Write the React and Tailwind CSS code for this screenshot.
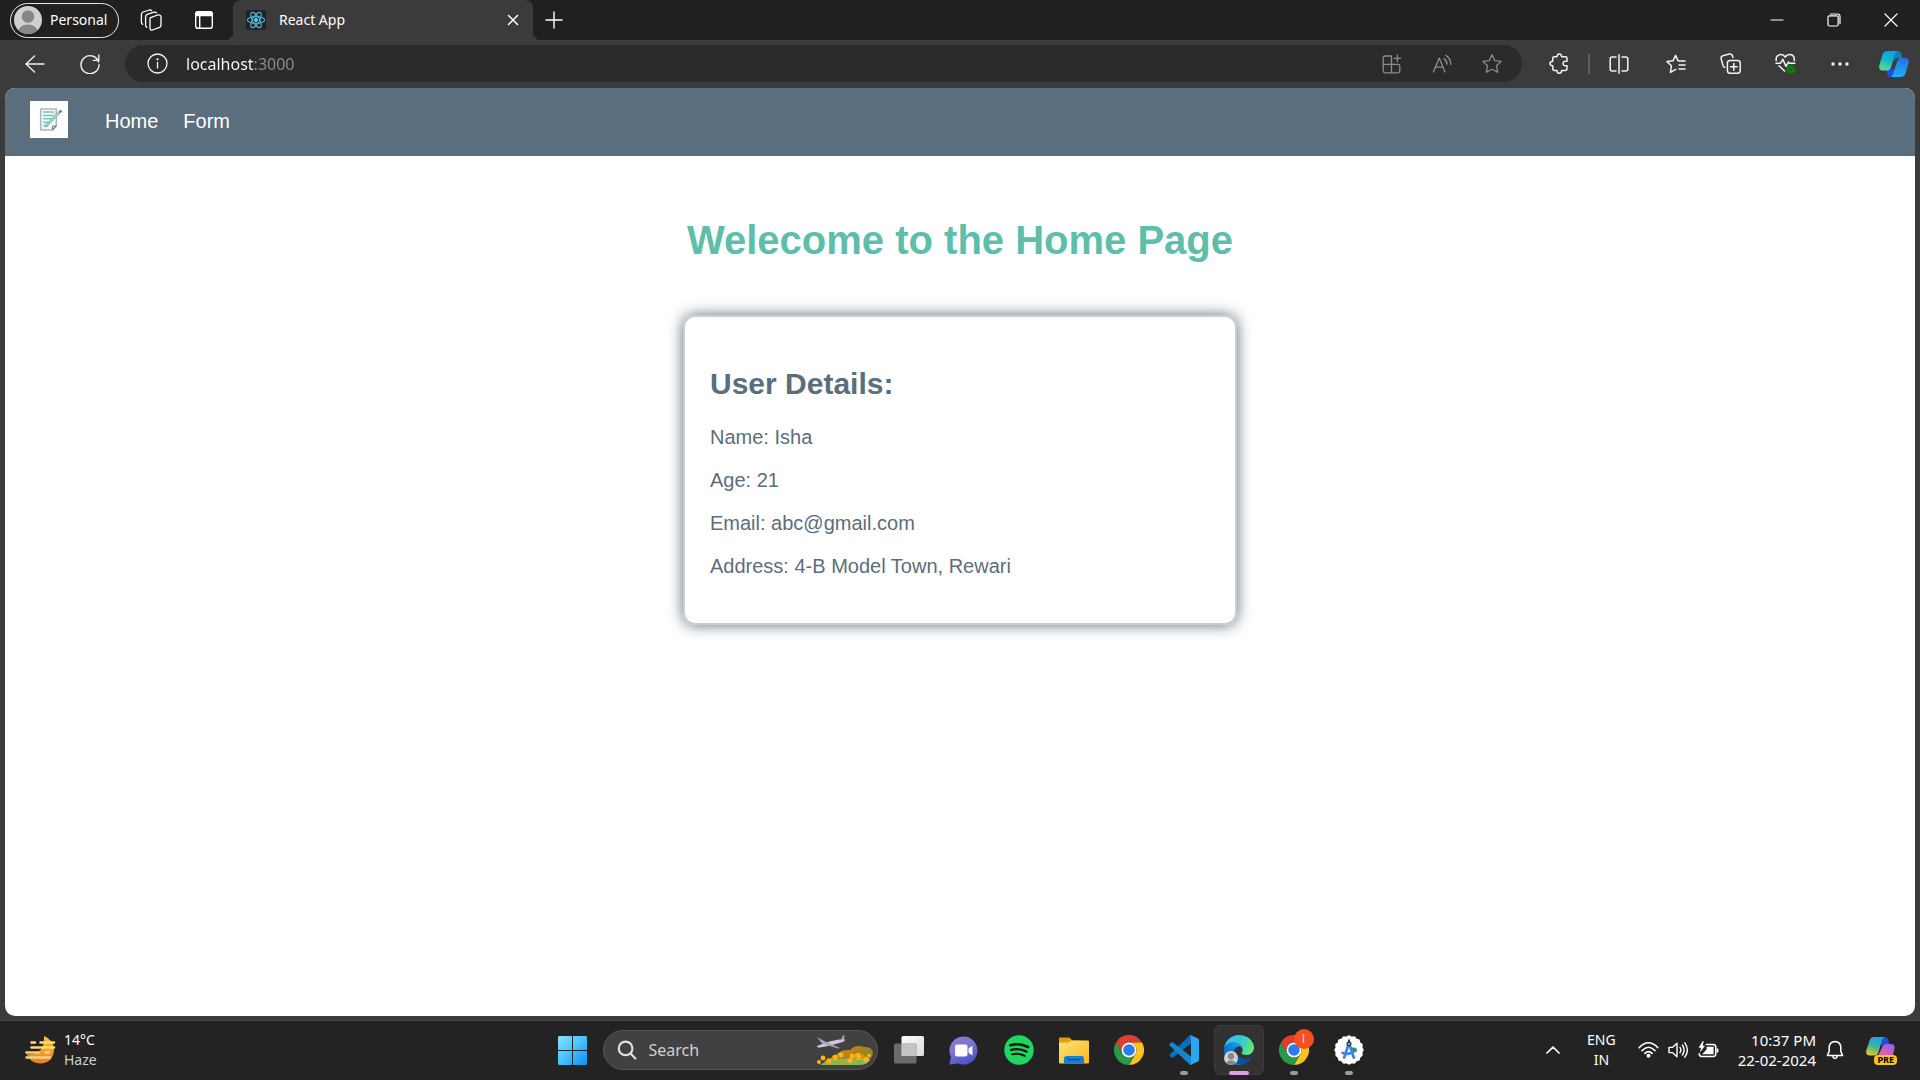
import React from "react";

function Svg({ w = 20, h = 20, sw = 1.4, children, className = "" }) {
  return (
    <svg
      width={w}
      height={h}
      viewBox={`0 0 ${w} ${h}`}
      fill="none"
      stroke="currentColor"
      strokeWidth={sw}
      strokeLinecap="round"
      strokeLinejoin="round"
      className={`shrink-0 ${className}`}
      aria-hidden="true"
    >
      {children}
    </svg>
  );
}

function IconButton({ label, className = "", children }) {
  return (
    <button
      type="button"
      aria-label={label}
      className={`flex shrink-0 items-center justify-center ${className}`}
    >
      {children}
    </button>
  );
}

function Avatar({ size = 28 }) {
  return (
    <svg width={size} height={size} viewBox="0 0 28 28" className="shrink-0" aria-hidden="true">
      <defs>
        <clipPath id={`avatar${size}`}>
          <circle cx="14" cy="14" r="14" />
        </clipPath>
      </defs>
      <g clipPath={`url(#avatar${size})`}>
        <rect width="28" height="28" fill="#d2d0ce" />
        <circle cx="14" cy="10.5" r="6.3" fill="#8a8684" />
        <ellipse cx="14" cy="26" rx="10" ry="7.4" fill="#8a8684" />
      </g>
    </svg>
  );
}

function ReactLogo() {
  return (
    <svg width="20" height="20" viewBox="0 0 20 20" className="shrink-0" aria-hidden="true">
      <rect width="20" height="20" rx="2" fill="#20232a" />
      <g fill="none" stroke="#4fb8d4" strokeWidth="1.1">
        <ellipse cx="10" cy="10" rx="8.6" ry="3.4" />
        <ellipse cx="10" cy="10" rx="8.6" ry="3.4" transform="rotate(60 10 10)" />
        <ellipse cx="10" cy="10" rx="8.6" ry="3.4" transform="rotate(120 10 10)" />
      </g>
      <circle cx="10" cy="10" r="1.9" fill="#61dafb" />
    </svg>
  );
}

function TitleBar() {
  return (
    <div className="flex h-10 items-center bg-[#202020] text-white">
      <button
        type="button"
        className="ml-[10px] mr-[5px] flex h-[35px] w-[109px] shrink-0 items-center gap-2 rounded-full border border-[#e8e8e8] pl-[3px] text-sm"
      >
        <Avatar />
        Personal
      </button>
      <IconButton label="Workspaces" className="h-10 w-[53px]">
        <Svg w={22} h={22} sw={1.3}>
          <path d="M10.6 8.6 L17.6 6 Q21 5.6 21 8 V16 Q21 17.6 19.6 18.3 L12.4 21 Q10 21.4 10 19 V10 Q10 9 10.6 8.6 Z" />
          <path d="M6.8 18.2 Q5.6 17.6 5.6 16 V8 Q5.6 6.2 7.2 5.4 L14 3.2 Q15.6 2.8 16.4 3.8" />
          <path d="M2.6 15.4 Q1.4 14.6 1.4 13 V5.4 Q1.4 3.8 3 3 L9.4 1 Q11 .7 11.6 1.6" />
        </Svg>
      </IconButton>
      <IconButton label="Vertical tabs" className="mr-[3px] h-10 w-[53px]">
        <Svg w={20} h={20}>
          <rect x="1.7" y="1.7" width="16.6" height="16.6" rx="2.4" />
          <path d="M1.2 6.2 V3.6 Q1.2 1.2 3.6 1.2 H16.4 Q18.8 1.2 18.8 3.6 V6.2 Z" fill="currentColor" stroke="none" />
          <path d="M5.7 6 V18" />
        </Svg>
      </IconButton>
      <div className="relative flex h-10 w-[300px] items-center gap-[13px] rounded-t-lg bg-[#3b3b3b] pl-[13px] pr-[11px] before:absolute before:-left-2 before:bottom-0 before:size-2 before:rounded-br-lg before:shadow-[4px_4px_0_0_#3b3b3b] after:absolute after:-right-2 after:bottom-0 after:size-2 after:rounded-bl-lg after:shadow-[-4px_4px_0_0_#3b3b3b]">
        <ReactLogo />
        <span className="flex-1 text-sm">React App</span>
        <IconButton label="Close tab" className="size-[18px]">
          <Svg w={12} h={12} sw={1.5}>
            <path d="M1.5 1.5 L10.5 10.5 M10.5 1.5 L1.5 10.5" />
          </Svg>
        </IconButton>
      </div>
      <IconButton label="New tab" className="h-10 w-[42px]">
        <Svg w={18} h={18} sw={1.4}>
          <path d="M9 1 V17 M1 9 H17" />
        </Svg>
      </IconButton>
      <div className="flex-1" />
      <div className="flex pr-px">
        <IconButton label="Minimize" className="h-10 w-[57px]">
          <Svg w={14} h={14} sw={1.2}>
            <path d="M1 7 H13" />
          </Svg>
        </IconButton>
        <IconButton label="Restore" className="h-10 w-[57px]">
          <Svg w={14} h={14} sw={1.2}>
            <rect x="1" y="2.8" width="10.2" height="10.2" rx="1.5" />
            <path d="M3.4 1 H10.4 Q13 1 13 3.6 V10.6" />
          </Svg>
        </IconButton>
        <IconButton label="Close window" className="h-10 w-[57px]">
          <Svg w={14} h={14} sw={1.2}>
            <path d="M1 1 L13 13 M13 1 L1 13" />
          </Svg>
        </IconButton>
      </div>
    </div>
  );
}

const STAR =
  "M11 1.8 L13.7 7.6 L20.2 8.4 L15.5 12.8 L16.7 19.3 L11 16.2 L5.3 19.3 L6.5 12.8 L1.8 8.4 L8.3 7.6 Z";

function CopilotLogo() {
  return (
    <svg width="30" height="28" viewBox="0 0 30 28" className="shrink-0" aria-hidden="true">
      <defs>
        <linearGradient id="cpA" x1="0.6" y1="0" x2="0.3" y2="1">
          <stop offset="0" stopColor="#0d9fe8" />
          <stop offset="0.5" stopColor="#16b8c8" />
          <stop offset="1" stopColor="#5fdc8c" />
        </linearGradient>
        <linearGradient id="cpB" x1="0.6" y1="0" x2="0.4" y2="1">
          <stop offset="0" stopColor="#2a6fe0" />
          <stop offset="1" stopColor="#17b4ff" />
        </linearGradient>
      </defs>
      <path d="M14 1 H19 Q21.5 1 22.3 4 L23.3 8 H19 Q16.5 8 15.5 11 Z" fill="#0b7fb8" />
      <path d="M16 27 H11.5 Q9 27 8.2 24 L7 20 H11 Q13.5 20 14.5 17 Z" fill="#1f4fe0" />
      <path d="M8 1 H19 Q16.8 1.4 16 4 L12.2 17 Q11.2 20.5 8 20.5 H4 Q-.8 20.5 .4 15 L3.4 5 Q4.6 1 8 1 Z" fill="url(#cpA)" />
      <path d="M22 8 H26 Q30.8 8 29.6 13 L26.6 23 Q25.4 27 22 27 H11.5 Q13.5 26.6 14.2 24 L18 11.5 Q19 8 22 8 Z" fill="url(#cpB)" />
    </svg>
  );
}

function Toolbar() {
  return (
    <div className="flex h-12 items-center bg-[#3b3b3b] pb-px pl-[12px] text-[#f2f2f2]">
      <IconButton label="Back" className="h-10 w-[45px]">
        <Svg w={20} h={18}>
          <path d="M19 9 H1 M9.5 1 L1 9 L9.5 17" />
        </Svg>
      </IconButton>
      <IconButton label="Refresh" className="mr-[2px] h-10 w-[66px]">
        <Svg w={20} h={20}>
          <path d="M18.6 8 A9 9 0 1 0 19 10.6 M18.8 1 V6.4 H13.4" />
        </Svg>
      </IconButton>
      <div className="flex h-[37px] flex-1 items-center rounded-full bg-[#2b2b2b] pl-[22px] pr-[5px]">
        <IconButton label="Site information" className="mr-[18px] size-[21px]">
          <Svg w={21} h={21} sw={1.3}>
            <circle cx="10.5" cy="10.5" r="9.5" />
            <path d="M10.5 9.5 V15" />
            <circle cx="10.5" cy="6.3" r="0.5" fill="currentColor" />
          </Svg>
        </IconButton>
        <input
          type="text"
          aria-label="Address"
          defaultValue="localhost:3000"
          className="min-w-0 flex-1 bg-[linear-gradient(90deg,#fff_68px,#8c8c8c_68px)] bg-clip-text text-base text-transparent outline-none"
        />
        <div className="flex text-[#8c8c8c]">
          <IconButton label="Install app" className="h-9 w-[50px]">
            <Svg w={20} h={20} sw={1.3}>
              <path d="M9.5 2 H3 Q1.2 2 1.2 3.8 V17 Q1.2 18.8 3 18.8 H16 Q17.8 18.8 17.8 17 V12.2 Q17.8 10.4 16 10.4 H1.2 M9.5 2 V18.8 M15.4 1 V7.6 M12.1 4.3 H18.7" />
            </Svg>
          </IconButton>
          <IconButton label="Read aloud" className="h-9 w-[50px]">
            <Svg w={20} h={20} sw={1.3}>
              <path d="M1.4 18 L7.2 4 L13 18 M3.4 13.2 H11 M12 4.6 Q15 6.4 15 10.2 M13.8 1.4 Q18.8 4.2 18.8 10.4" />
            </Svg>
          </IconButton>
          <IconButton label="Add to favorites" className="h-9 w-[50px]">
            <Svg w={22} h={21} sw={1.3}>
              <path d={STAR} />
            </Svg>
          </IconButton>
        </div>
      </div>
      <IconButton label="Extensions" className="ml-[9px] h-10 w-[55px]">
        <Svg w={20} h={21} sw={1.5}>
          <path d="M5 3.8 H8 Q8 .9 10.3 .9 Q12.6 .9 12.6 3.8 H16.5 Q18 3.8 18 5.3 V8.2 Q14 7.8 14 10.5 Q14 13.2 18 12.8 V16 Q18 17.4 16.5 17.4 H12.6 Q12.6 20.2 10.3 20.2 Q8 20.2 8 17.4 H5.3 Q3.8 17.4 3.8 16 V12.8 Q1 12.8 1 10.5 Q1 8.2 3.8 8.2 V5.3 Q3.8 3.8 5 3.8 Z" />
        </Svg>
      </IconButton>
      <div className="ml-[2px] h-5 w-[2px] bg-[#5e5e5e]" />
      <IconButton label="Split screen" className="h-10 w-[58px]">
        <Svg w={20} h={20} sw={1.5}>
          <path d="M7 3 H3.2 Q1.2 3 1.2 5 V15 Q1.2 17 3.2 17 H7 M13 3 H16.8 Q18.8 3 18.8 5 V15 Q18.8 17 16.8 17 H13 M10 .8 V19.2" />
        </Svg>
      </IconButton>
      <IconButton label="Favorites" className="h-10 w-[55px]">
        <Svg w={20} h={20} sw={1.5}>
          <path d="M13 6.8 H12 L9.6 1.4 L7 6.8 L1 7.6 L5.4 11.8 L4.4 18.4 L9.8 15.4 M13 7 H19 M13 11 H19 M13 15 H19" />
        </Svg>
      </IconButton>
      <IconButton label="Collections" className="h-10 w-[55px]">
        <Svg w={21} h={21} sw={1.5}>
          <rect x="7.4" y="7.4" width="12.8" height="12.8" rx="2.6" />
          <path d="M13.8 10.4 V17.2 M10.4 13.8 H17.2 M4.8 14.4 Q3.4 13.8 2.9 12.2 L1.1 5.6 Q.7 3.4 2.8 2.7 L9.4 1 Q11.6 .6 12.4 2.6 L13 4.4" />
        </Svg>
      </IconButton>
      <IconButton label="Browser essentials" className="h-10 w-[55px]">
        <Svg w={21} h={21} sw={1.5}>
          <path d="M1.2 7.6 Q.6 2 5.4 1.6 Q8.6 1.4 10.2 4 Q11.8 1.4 15 1.6 Q19.8 2 19.2 7.6 M1 10.2 H5.6 L7.8 6.4 L11 13.4 L13.4 9 L14.4 10.2 H19.8 M4 12.8 L9.6 18" />
          <circle cx="15.8" cy="16.2" r="4.6" fill="#107c10" stroke="none" />
          <path d="M13.8 16.4 L15.2 17.8 L17.8 15" strokeWidth="1" stroke="#0a4d0a" />
        </Svg>
      </IconButton>
      <IconButton label="Settings and more" className="h-10 w-[54px]">
        <svg width="18" height="4" viewBox="0 0 18 4" fill="currentColor" aria-hidden="true">
          <circle cx="2" cy="2" r="1.7" />
          <circle cx="9" cy="2" r="1.7" />
          <circle cx="16" cy="2" r="1.7" />
        </svg>
      </IconButton>
      <IconButton label="Copilot" className="h-10 w-[53px]">
        <CopilotLogo />
      </IconButton>
    </div>
  );
}

function FormLogo() {
  return (
    <svg width="38" height="37" viewBox="0 0 38 37" className="shrink-0" role="img" aria-label="Form logo">
      <rect width="38" height="37" fill="#fff" />
      <path d="M10.7 8 H26.3 V25 L22.6 29 H10.7 Z" fill="#f4f8f9" stroke="#a9b8c2" strokeWidth="1.6" strokeLinejoin="round" />
      <path d="M13 11 H24 M13 14.4 H24 M13 17.8 H23 M13 21.2 H20 M13 24.6 H18" stroke="#6fcdb7" strokeWidth="1.5" />
      <path d="M16 25 L29.4 11.4" stroke="#7ba3a9" strokeWidth="2.6" strokeLinecap="round" />
      <path d="M16 25 L29 11.8" stroke="#a3ddd0" strokeWidth="1.4" />
      <circle cx="30.6" cy="10.4" r="1.4" fill="#6f818e" />
      <path d="M22.6 28.6 V25.2 H26.2 Z" fill="#fff" stroke="#5c6c78" strokeWidth="1" />
    </svg>
  );
}

const DETAILS = ["Name: Isha", "Age: 21", "Email: abc@gmail.com", "Address: 4-B Model Town, Rewari"];

function Page() {
  return (
    <div className="flex flex-1 flex-col bg-[#3b3b3b] px-[5px] pb-1">
      <div className="flex-1 overflow-hidden rounded-[10px] bg-white font-['Liberation_Sans',Arial,sans-serif]">
        <nav className="flex items-start gap-[37px] bg-[#5b6e7d] pb-[18px] pl-[25px] pt-[13px]">
          <FormLogo />
          <div className="mt-[9px] flex gap-[25px] text-xl leading-[23px] text-white">
            <a href="#home">Home</a>
            <a href="#form">Form</a>
          </div>
        </nav>
        <main className="flex flex-col items-center px-4 pt-[61px]">
          <h1 className="mb-[52px] text-[40px] font-bold leading-[46px] text-[#5dbeab]">
            Welecome to the Home Page
          </h1>
          <section className="w-[554px] max-w-full rounded-xl border-2 border-[#ccc] px-[25px] pb-[45px] pt-[50px] text-[#5b6e7d] shadow-[0_0_15px_0_#5b6e7d]">
            <h2 className="mb-[25px] text-[30px] font-bold leading-[34px]">User Details:</h2>
            <div className="flex flex-col gap-5 text-xl leading-[23px]">
              {DETAILS.map((d) => (
                <p key={d}>{d}</p>
              ))}
            </div>
          </section>
        </main>
      </div>
    </div>
  );
}

function WeatherIcon() {
  return (
    <svg width="31" height="30" viewBox="0 0 31 30" className="shrink-0" aria-hidden="true">
      <defs>
        <linearGradient id="moon" x1="0" y1="0" x2="0" y2="1">
          <stop offset="0" stopColor="#f8c437" />
          <stop offset="1" stopColor="#ee7d1c" />
        </linearGradient>
      </defs>
      <path d="M19 1 Q29 5 29 15 Q28 28 15 28.6 Q5 28 1.6 19 Q20 21 19 1 Z" fill="url(#moon)" />
      <g strokeWidth="2.6" strokeLinecap="round" fill="none">
        <path d="M6.5 7.5 H10 M15.5 7.5 H29 M6.5 12.5 H29" stroke="#fbdc74" />
        <path d="M1.5 17.5 H14 M20.5 17.5 H24 M1.5 22.5 H25" stroke="#f0cf88" />
      </g>
    </svg>
  );
}

function StartIcon() {
  return (
    <svg width="29" height="29" viewBox="0 0 29 29" aria-hidden="true">
      <defs>
        <linearGradient id="win" x1="0" y1="0" x2="1" y2="1">
          <stop offset="0" stopColor="#86e0ff" />
          <stop offset="0.45" stopColor="#4cc6fb" />
          <stop offset="1" stopColor="#0a8ff5" />
        </linearGradient>
      </defs>
      <path d="M1 0 H14 V14 H0 V1 Z M15 0 H28 L29 1 V14 H15 Z M0 15 H14 V29 H1 L0 28 Z M15 15 H29 V28 L28 29 H15 Z" fill="url(#win)" />
    </svg>
  );
}

function SearchArt() {
  return (
    <svg width="57" height="30" viewBox="0 0 57 30" className="shrink-0" aria-hidden="true">
      <defs>
        <linearGradient id="hill" x1="0" y1="0" x2="1" y2="0.6">
          <stop offset="0" stopColor="#d8a020" />
          <stop offset="0.5" stopColor="#b5801c" />
          <stop offset="1" stopColor="#7f8a22" />
        </linearGradient>
      </defs>
      <path d="M18 22 Q24 14 34 15 Q40 9 48 12 Q56 11 57 18 Q56 24 50 29 H20 Z" fill="url(#hill)" />
      <path d="M4 30 Q12 23 28 24 Q44 20 54 25 Q50 30 44 30 Z" fill="#86b850" />
      <g fill="#ffb514">
        <circle cx="3" cy="27" r="2" />
        <circle cx="7" cy="23" r="2.4" />
        <circle cx="13" cy="26" r="2.8" />
        <circle cx="19" cy="22.5" r="2.8" />
        <circle cx="25" cy="20" r="2.4" />
        <circle cx="34" cy="25.5" r="2.6" />
        <circle cx="36" cy="21" r="2.4" />
        <circle cx="42" cy="21.5" r="3.4" />
        <circle cx="50" cy="24.5" r="2.8" />
        <circle cx="53" cy="20.5" r="1.8" />
      </g>
      <g fill="#ff8c0a">
        <circle cx="10" cy="27" r="1.5" />
        <circle cx="16" cy="24" r="1.6" />
        <circle cx="27" cy="27.5" r="1.7" />
        <circle cx="40" cy="23" r="1.4" />
        <circle cx="47" cy="21" r="1.4" />
      </g>
      <path d="M1 11 Q14 5 29 4 L28 6.4 Q18 10 4 12.4 Q1 13 1 11 Z" fill="#cfc8dc" />
      <path d="M1 2 L9 6.5 L24 13 L22 13.4 L6 8.5 Z" fill="#aaa0c4" />
      <path d="M25 4.6 L27 .2 L28.4 .8 L28 4 L29.4 6.6 Z" fill="#c49ab0" />
    </svg>
  );
}

function TaskView() {
  return (
    <svg width="30" height="28" viewBox="0 0 30 28" aria-hidden="true">
      <defs>
        <linearGradient id="tv" x1="0" y1="0" x2="1" y2="1">
          <stop offset="0" stopColor="#ffffff" />
          <stop offset="1" stopColor="#d9d9d9" />
        </linearGradient>
      </defs>
      <rect x="7.5" y="0" width="22.5" height="20" rx="1.5" fill="url(#tv)" />
      <rect x="0" y="7.5" width="22.5" height="20" rx="1.5" fill="#7d7d7d" fillOpacity="0.8" />
      <rect x="7.5" y="7.5" width="15" height="12.5" fill="#c4c4c4" />
    </svg>
  );
}

function ChatIcon() {
  return (
    <svg width="29" height="29" viewBox="0 0 29 29" aria-hidden="true">
      <defs>
        <linearGradient id="chat" x1="0" y1="0" x2="0.5" y2="1">
          <stop offset="0" stopColor="#8f7fc4" />
          <stop offset="0.5" stopColor="#7a74d6" />
          <stop offset="1" stopColor="#4e52cc" />
        </linearGradient>
      </defs>
      <path d="M14.5 .5 A14 14 0 1 1 9 27.4 L1.4 28.6 Q.2 28.6 .6 27.2 L2 21 A14 14 0 0 1 14.5 .5 Z" fill="url(#chat)" />
      <rect x="6" y="8.5" width="12.5" height="12" rx="2" fill="#fff" />
      <path d="M19.5 12.4 L23.4 9.8 V19.4 L19.5 16.8 Z" fill="#fff" />
    </svg>
  );
}

function SpotifyIcon() {
  return (
    <svg width="30" height="30" viewBox="0 0 30 30" aria-hidden="true">
      <circle cx="15" cy="15" r="14.7" fill="#1ed760" />
      <g fill="none" stroke="#10140f" strokeLinecap="round">
        <path d="M6.4 10.2 Q16 7.6 24 12" strokeWidth="2.7" />
        <path d="M7.2 14.9 Q15.4 12.8 22.4 16.6" strokeWidth="2.3" />
        <path d="M8 19.3 Q14.8 17.6 20.8 20.9" strokeWidth="1.9" />
      </g>
    </svg>
  );
}

function FolderIcon() {
  return (
    <svg width="30" height="27" viewBox="0 0 30 27" aria-hidden="true">
      <defs>
        <linearGradient id="fold" x1="0" y1="0" x2="1" y2="1">
          <stop offset="0" stopColor="#ffe07a" />
          <stop offset="1" stopColor="#fbb91c" />
        </linearGradient>
      </defs>
      <path d="M1 .5 H9.5 Q10.4 .5 11 1.1 L13.4 3.6 H22 V10 H0 V1.5 Q0 .5 1 .5 Z" fill="#e0a00a" />
      <path d="M0 5.4 H9.8 Q10.6 5.4 11.2 4.8 L12.4 3.6 H29 Q30 3.6 30 4.6 V25.5 Q30 26.5 29 26.5 H1 Q0 26.5 0 25.5 Z" fill="url(#fold)" />
      <path d="M5 26.5 V21.5 Q5 19 7.5 19 H22.5 Q25 19 25 21.5 V26.5 Z" fill="#1680d4" />
      <path d="M9 22.7 H21" stroke="#0b4f94" strokeWidth="1.2" strokeLinecap="round" />
    </svg>
  );
}

function ChromeIcon() {
  return (
    <svg width="30" height="30" viewBox="0 0 30 30" aria-hidden="true">
      <path d="M2 7.5 A15 15 0 0 1 28 7.5 H15 A7.5 7.5 0 0 0 8.5 18.75 Z" fill="#e33b2e" />
      <path d="M28 7.5 A15 15 0 0 1 15 30 L21.5 18.75 A7.5 7.5 0 0 0 15 7.5 Z" fill="#fcc21c" />
      <path d="M15 30 A15 15 0 0 1 2 7.5 L8.5 18.75 A7.5 7.5 0 0 0 21.5 18.75 Z" fill="#2a9a48" />
      <circle cx="15" cy="15" r="7.5" fill="#fff" />
      <circle cx="15" cy="15" r="5.8" fill="#2f7bee" />
    </svg>
  );
}

function CodeIcon() {
  return (
    <svg width="30" height="30" viewBox="0 0 30 30" aria-hidden="true">
      <path d="M.6 19.4 Q-.2 20.2 .6 21 L2.4 22.6 Q3.2 23.2 4 22.6 L22 8.6 V.2 Q21 .2 20.2 1 Z" fill="#0b6fb8" />
      <path d="M.6 10.6 Q-.2 9.8 .6 9 L2.4 7.4 Q3.2 6.8 4 7.4 L22 21.4 V29.8 Q21 29.8 20.2 29 Z" fill="#1485cf" />
      <path d="M22 .2 L29 3.4 Q30 4 30 5 V25 Q30 26 29 26.6 L22 29.8 Q20.6 30 20.2 29 Q22 29.6 22 27.6 V2.4 Q22 .4 20.2 1 Q21 0 22 .2 Z" fill="#2ba7f0" />
    </svg>
  );
}

function EdgeIcon() {
  return (
    <svg width="30" height="30" viewBox="0 0 256 256" aria-hidden="true">
      <defs>
        <linearGradient id="edA" x1="0.2" y1="0.7" x2="1" y2="0.7">
          <stop offset="0" stopColor="#0c59a4" />
          <stop offset="1" stopColor="#114a8b" />
        </linearGradient>
        <linearGradient id="edB" x1="0.9" y1="0.3" x2="0.3" y2="0.9">
          <stop offset="0" stopColor="#1b9de2" />
          <stop offset="0.5" stopColor="#1180d8" />
          <stop offset="1" stopColor="#0667c8" />
        </linearGradient>
        <linearGradient id="edC" x1="0" y1="0.3" x2="1" y2="0.6">
          <stop offset="0" stopColor="#35c1f1" />
          <stop offset="0.5" stopColor="#2fc9d8" />
          <stop offset="1" stopColor="#66eb6e" />
        </linearGradient>
      </defs>
      <path fill="url(#edA)" d="M231.1 190.5c-3.4 1.8-6.9 3.4-10.5 4.7-11.5 4.3-23.6 6.5-35.9 6.5-47.3 0-88.5-32.5-88.5-74.3.1-11.4 6.4-21.9 16.4-27.3-42.8 1.8-53.8 46.4-53.8 72.5 0 74 68.1 81.4 82.8 81.4 7.9 0 19.8-2.3 27-4.6l1.3-.4c27.6-9.5 51-28.1 66.6-52.8 1.2-1.9.6-4.3-1.2-5.5-1.3-.8-2.9-.9-4.2-.2z" />
      <path fill="url(#edB)" d="M105.7 241.4c-8.9-5.5-16.6-12.8-22.7-21.3-26.3-36-18.4-86.5 17.6-112.8 3.8-2.7 7.7-5.2 11.9-7.2 3.1-1.5 8.4-4.1 15.5-4 10.1.1 19.6 4.9 25.7 13 4 5.4 6.3 11.9 6.4 18.7 0-.2 24.5-79.6-80-79.6-43.9 0-80 41.7-80 78.2-.2 19.3 4 38.5 12.1 56 27.6 58.8 94.8 87.6 156.4 67.1-21.1 6.6-44.1 3.7-62.9-8.1z" />
      <path fill="url(#edC)" d="M152.3 148.9c-.8 1-3.3 2.5-3.3 5.7 0 2.6 1.7 5.1 4.7 7.2 14.4 10 41.5 8.7 41.6 8.7 10.7 0 21.1-2.9 30.3-8.3 18.8-11 30.4-31.1 30.4-52.9.3-22.4-8-37.3-11.3-43.9C223.5 23.9 177.7 0 128 0 58 0 1 56.2 0 126.2c.5-36.5 36.8-66 80-66 3.5 0 23.5.3 42 10.1 16.3 8.6 24.9 18.9 30.8 29.2 6.2 10.7 7.3 24.1 7.3 29.5 0 5.3-2.7 13.3-7.8 19.9z" />
    </svg>
  );
}

const SCALLOPS = Array.from({ length: 16 }, (_, i) => (i * Math.PI) / 8);

function StudioIcon() {
  return (
    <svg width="30" height="30" viewBox="0 0 30 30" aria-hidden="true">
      <circle cx="15" cy="15" r="13.8" fill="#fff" />
      {SCALLOPS.map((a) => (
        <circle key={a} cx={15 + 12.6 * Math.cos(a)} cy={15 + 12.6 * Math.sin(a)} r="2.1" fill="#fff" />
      ))}
      <path d="M17 12.6 H20 Q23 13 23 16 Q22 18 19 17 Z" fill="#1f9d57" />
      <path d="M13.4 8.4 H16.6 L21.4 23 L19.6 24.2 L18.4 22.8 L15 12.4 L11.6 22.8 L10.4 24.2 L8.6 23 Z" fill="#3f82ee" />
      <path d="M7.4 17.4 Q15 21 20.6 15.6" stroke="#3f82ee" strokeWidth="2.6" fill="none" />
      <path d="M15 4.4 V7" stroke="#303c42" strokeWidth="2" />
      <circle cx="15" cy="8.8" r="1.7" fill="#fff" stroke="#303c42" strokeWidth="1.6" />
    </svg>
  );
}

function TaskButton({ label, active, running, children }) {
  return (
    <button
      type="button"
      aria-label={label}
      className={
        active
          ? "relative flex size-[50px] shrink-0 items-center justify-center rounded-md border border-[#3d3d3d] bg-[#323232]"
          : "relative flex size-[50px] shrink-0 items-center justify-center"
      }
    >
      {children}
      {active && <span className="absolute -bottom-px h-1 w-5 rounded-full bg-[#dc9fe4]" />}
      {running && <span className="absolute bottom-0 h-1 w-2 rounded-full bg-[#9b9b9b]" />}
    </button>
  );
}

function CopilotPreview() {
  return (
    <svg width="30" height="29" viewBox="0 0 30 29" aria-hidden="true">
      <defs>
        <linearGradient id="cvA" x1="0.6" y1="0" x2="0.3" y2="1">
          <stop offset="0" stopColor="#1fa2f0" />
          <stop offset="0.5" stopColor="#36b59a" />
          <stop offset="1" stopColor="#e8c81e" />
        </linearGradient>
        <linearGradient id="cvB" x1="0.7" y1="0" x2="0.3" y2="1">
          <stop offset="0" stopColor="#9a5cf0" />
          <stop offset="1" stopColor="#f0609a" />
        </linearGradient>
      </defs>
      <path d="M14 1 H19 Q21.5 1 22.3 4 L23.3 8 H19 Q16.5 8 15.5 11 Z" fill="#1d50d8" />
      <path d="M8 1 H19 Q16.8 1.4 16 4 L12.6 16 Q11.6 19.5 8 19.5 H4 Q-.8 19.5 .4 14 L3.4 5 Q4.6 1 8 1 Z" fill="url(#cvA)" />
      <path d="M20 8 H25 Q29.4 8 28.4 13 L26.4 21 H11.5 L16 11.5 Q17 8 20 8 Z" fill="url(#cvB)" />
    </svg>
  );
}

function Taskbar() {
  return (
    <footer className="grid h-[60px] grid-cols-[1fr_auto_1fr] items-center border-t border-[#474747] bg-[#232323] pb-px text-white">
      <button type="button" className="flex items-center gap-2 justify-self-start pl-[25px] text-left text-sm leading-5">
        <WeatherIcon />
        <span className="flex flex-col">
          <span>14°C</span>
          <span className="text-[#cfcfcf]">Haze</span>
        </span>
      </button>

      <div className="flex items-center gap-[5px] pl-px">
        <TaskButton label="Start">
          <StartIcon />
        </TaskButton>
        <label className="mr-px flex h-10 w-[275px] items-center rounded-full border border-[#585858] bg-[#414141] pl-[13px] pr-1">
          <Svg w={20} h={20} sw={2.2} className="mr-[12px] text-[#e0e0e0]">
            <circle cx="8.6" cy="8.4" r="6.8" />
            <path d="M13.6 13.4 L18.4 18.4" />
          </Svg>
          <input
            type="text"
            aria-label="Search"
            placeholder="Search"
            className="min-w-0 flex-1 bg-transparent text-base outline-none placeholder:text-[#d0d0d0]"
          />
          <SearchArt />
        </label>
        <TaskButton label="Task view">
          <TaskView />
        </TaskButton>
        <TaskButton label="Chat">
          <ChatIcon />
        </TaskButton>
        <TaskButton label="Spotify">
          <SpotifyIcon />
        </TaskButton>
        <TaskButton label="File Explorer">
          <FolderIcon />
        </TaskButton>
        <TaskButton label="Google Chrome">
          <ChromeIcon />
        </TaskButton>
        <TaskButton label="Visual Studio Code" running>
          <CodeIcon />
        </TaskButton>
        <TaskButton label="Microsoft Edge" active>
          <EdgeIcon />
          <span className="absolute bottom-[9px] left-[9px]">
            <Avatar size={14} />
          </span>
        </TaskButton>
        <TaskButton label="Google Chrome, profile I" running>
          <ChromeIcon />
          <span className="absolute right-[5px] top-[4px] flex size-5 items-center justify-center rounded-full bg-[#f4511e] font-['Liberation_Sans',Arial,sans-serif] text-xs leading-none text-[#ffd0c0]">
            I
          </span>
        </TaskButton>
        <TaskButton label="Android Studio" running>
          <StudioIcon />
        </TaskButton>
      </div>

      <div className="flex items-center justify-end pr-[24px]">
        <IconButton label="Show hidden icons" className="mr-[16px] h-10 w-[36px]">
          <Svg w={14} h={8} sw={1.7}>
            <path d="M1 7 L7 1 L13 7" />
          </Svg>
        </IconButton>
        <button type="button" className="mr-[22px] flex flex-col items-center text-sm leading-5">
          <span>ENG</span>
          <span>IN</span>
        </button>
        <button type="button" aria-label="Network, volume and battery" className="mr-[19px] flex items-center gap-[9px]">
          <Svg w={21} h={18} sw={1.6}>
            <path d="M1.2 6.6 Q10.4 -3 19.8 6.6 M4 9.6 Q10.5 3 17 9.6 M6.8 12.4 Q10.5 8.8 14.2 12.4" />
            <circle cx="10.5" cy="14.8" r="1.2" fill="currentColor" />
          </Svg>
          <Svg w={21} h={18} sw={1.4}>
            <path d="M1 6.4 H4.4 L9 2.2 V15.8 L4.4 11.6 H1 Z M12 6.4 Q13.8 9 12 11.6 M14.4 4 Q17.8 9 14.4 14 M16.8 1.8 Q22 9 16.8 16.2" />
          </Svg>
          <Svg w={21} h={18} sw={1.5}>
            <path d="M8.4 3.6 H15.2 Q17.8 3.6 17.8 6.2 V12.8 Q17.8 15.4 15.2 15.4 H3.6 Q1.2 15.4 1.2 12.8" />
            <path d="M8.6 5.8 H15.6 V13.2 H4.2 L8.6 8.4 Z M18.6 7 Q20.6 7.4 20.6 9.5 Q20.6 11.6 18.6 12 Z" fill="currentColor" stroke="none" />
            <path d="M4.6 .2 L.6 6.8 H3 L2 11.6 L7 4.8 H4.6 L5.8 .2 Z" fill="currentColor" stroke="none" />
          </Svg>
        </button>
        <button type="button" className="mr-[10px] text-right text-[15px] leading-5">
          <span className="block">10:37 PM</span>
          <span className="block">22-02-2024</span>
        </button>
        <IconButton label="Notifications" className="mr-[22px] h-10 w-[18px]">
          <Svg w={18} h={20} sw={1.5}>
            <path d="M9 1.4 Q3.4 1.6 3.2 7.4 V11.4 L1.4 15.4 H16.6 L14.8 11.4 V7.4 Q14.6 1.6 9 1.4 Z M6.8 15.8 Q7 18.4 9 18.4 Q11 18.4 11.2 15.8" />
          </Svg>
        </IconButton>
        <button type="button" aria-label="Copilot preview" className="relative size-[30px]">
          <CopilotPreview />
          <span className="absolute -right-px bottom-0 rounded-sm bg-[#f9c513] px-[3px] text-[9px] font-bold leading-[10px] text-black">
            PRE
          </span>
        </button>
      </div>
    </footer>
  );
}

export default function App() {
  return (
    <div className="flex min-h-screen flex-col bg-[#3b3b3b] font-['Noto_Sans','Open_Sans',sans-serif]">
      <TitleBar />
      <Toolbar />
      <Page />
      <Taskbar />
    </div>
  );
}
